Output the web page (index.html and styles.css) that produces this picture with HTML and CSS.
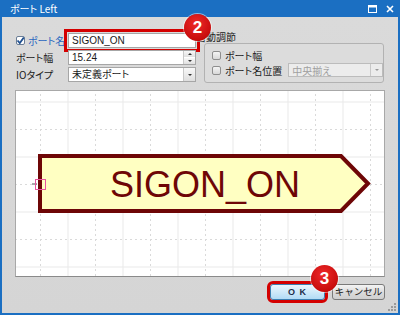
FILE: index.html
```html
<!DOCTYPE html>
<html lang="ja">
<head>
  <meta charset="UTF-8" />
  <title>ポート Left</title>
  <link rel="stylesheet" href="styles.css">
</head>
<body>

  <div class="window">
    <div class="titlebar">
      <span class="title">ポート Left</span>
      <div class="controls">
        <svg width="9" height="8" viewBox="0 0 9 8"><rect x="0.5" y="0.5" width="8" height="7" fill="none" stroke="#fff"/><rect x="0.5" y="0.5" width="8" height="2" fill="#fff"/></svg>
        <svg width="8" height="8" viewBox="0 0 8 8"><path d="M1 1 L7 7 M7 1 L1 7" stroke="#fff" stroke-width="1.6"/></svg>
      </div>
    </div>

    <div class="frame">
      <div class="top">
        <div class="form">
          <label class="lbl">
            <span class="check on"><svg width="9" height="9" viewBox="0 0 9 9"><path d="M1.5 4.5 L3.8 7 L7.8 1.5" fill="none" stroke="#1f4f8f" stroke-width="1.8"/></svg></span>
            <span class="blue">ポート名</span>
          </label>
          <div class="field mark"><span class="val">SIGON_ON</span></div>

          <span class="lbl">ポート幅</span>
          <div class="field">
            <span class="val">15.24</span>
            <span class="spin">
              <span class="spin-btn"><i class="tri up"></i></span>
              <span class="spin-btn"><i class="tri"></i></span>
            </span>
          </div>

          <span class="lbl">IOタイプ</span>
          <div class="field">
            <span class="val">未定義ポート</span>
            <span class="drop"><i class="tri"></i></span>
          </div>
        </div>

        <div class="group">
          <div class="group-title">自動調節</div>
          <div class="group-box">
            <label class="opt"><span class="check"></span>ポート幅</label>
            <div class="opt-row">
              <label class="opt"><span class="check"></span>ポート名位置</label>
              <div class="field disabled">
                <span class="val">中央揃え</span>
                <span class="drop"><i class="tri"></i></span>
              </div>
            </div>
          </div>
        </div>
      </div>

      <div class="canvas">
        <svg width="370" height="187" viewBox="0 0 370 187">
          <defs>
            <pattern id="grid" width="55" height="55" x="25" y="39" patternUnits="userSpaceOnUse">
              <path d="M0.5 0 V55 M0 0.5 H55" stroke="#dadada" stroke-dasharray="2 3" fill="none"/>
              <path d="M28 0 V55 M0 28 H55" stroke="#e9e9e9" fill="none"/>
            </pattern>
          </defs>
          <rect width="370" height="187" fill="url(#grid)"/>
          <path d="M25 66 H326 L353 93.5 L326 121 H25 Z" fill="#ffffc2" stroke="#6e0606" stroke-width="4"/>
          <text x="190" y="107" text-anchor="middle" class="port-name">SIGON_ON</text>
          <path d="M17 94 H22" stroke="#555"/>
          <rect x="20.5" y="89.5" width="10" height="10" fill="none" stroke="#e8559e"/>
        </svg>
      </div>

      <div class="buttons">
        <button class="btn ok">O K</button>
        <button class="btn">キャンセル</button>
      </div>
    </div>

    <span class="badge b2">2</span>
    <span class="badge b3">3</span>
    <svg class="grip" width="8" height="8" viewBox="0 0 8 8">
      <rect x="6" y="0" width="2" height="2" fill="#9a9a9a"/>
      <rect x="3" y="3" width="2" height="2" fill="#9a9a9a"/>
      <rect x="6" y="3" width="2" height="2" fill="#9a9a9a"/>
      <rect x="0" y="6" width="2" height="2" fill="#9a9a9a"/>
      <rect x="3" y="6" width="2" height="2" fill="#9a9a9a"/>
      <rect x="6" y="6" width="2" height="2" fill="#9a9a9a"/>
    </svg>
  </div>

</body>
</html>
```

FILE: styles.css
```css
body {
  margin: 0;
  font-family: 'Noto Sans CJK JP', 'Noto Sans', sans-serif;
  font-feature-settings: "palt";
  font-size: 10px;
  color: #1a1a1a;
}
.window {
  position: relative;
  width: 400px;
  height: 315px;
  display: flex;
  flex-direction: column;
}
.titlebar {
  height: 17px;
  background: #1b6fc2;
  color: #fff;
  display: flex;
  align-items: center;
  justify-content: space-between;
  padding: 0 6px 0 10px;
  font-size: 10px;
}
.title {
  line-height: 1;
}
.controls {
  display: flex;
  gap: 9px;
  align-items: center;
}
.frame {
  flex: 1;
  border: 2px solid #1b6fc2;
  border-top: 0;
  background: linear-gradient(#dadada, #d5d5d5);
  display: flex;
  flex-direction: column;
}

/* top part */
.top {
  display: flex;
  padding: 14px 0 0 14px;
}
.form {
  width: 180px;
  margin-top: 2px;
  display: grid;
  grid-template-columns: 52px 128px;
  grid-auto-rows: 15px;
  row-gap: 2px;
  align-items: center;
}
.lbl {
  display: flex;
  align-items: center;
  gap: 3px;
  white-space: nowrap;
}
.blue {
  color: #2a67c0;
}
.check {
  width: 9px;
  height: 9px;
  box-sizing: border-box;
  border: 1px solid #8e8e8e;
  border-radius: 2px;
  background: linear-gradient(#f4f4f4, #d8d8d8);
  display: inline-flex;
  flex: none;
}
.check.on {
  background: #fff;
  border-color: #6b7e96;
}
.check.on svg {
  margin: -1px;
}
.field {
  height: 15px;
  box-sizing: border-box;
  border: 1px solid #a6a6a6;
  background: #fff;
  display: flex;
  align-items: stretch;
  font-family: 'Liberation Sans', 'Noto Sans CJK JP', sans-serif;
}
.field .val {
  flex: 1;
  padding-left: 3px;
  line-height: 13px;
  white-space: nowrap;
}
.mark {
  outline: 3px solid #d40000;
  outline-offset: 1px;
}
.spin {
  width: 11px;
  display: flex;
  flex-direction: column;
  gap: 1px;
  border-left: 1px solid #c8c8c8;
}
.spin-btn {
  flex: 1;
  background: linear-gradient(#f8f8f8, #e0e0e0);
  display: flex;
  align-items: center;
  justify-content: center;
}
.drop {
  width: 11px;
  border-left: 1px solid #c8c8c8;
  background: linear-gradient(#f8f8f8, #dedede);
  display: flex;
  align-items: center;
  justify-content: center;
}
.tri {
  width: 0;
  height: 0;
  border-left: 2px solid transparent;
  border-right: 2px solid transparent;
  border-top: 2px solid #333;
}
.tri.up {
  border-top: 0;
  border-bottom: 2px solid #333;
}

.group {
  width: 189px;
}
.group-title {
  line-height: 12px;
  height: 12px;
}
.group-box {
  margin-left: 8px;
  width: 180px;
  height: 40px;
  box-sizing: border-box;
  border: 1px solid #b2b2b2;
  border-radius: 3px;
  background: #dcdcdc;
  padding: 5px 0 0 7px;
  display: flex;
  flex-direction: column;
  gap: 2px;
}
.opt {
  display: flex;
  align-items: center;
  gap: 4px;
  height: 12px;
  flex: none;
  white-space: nowrap;
}
.opt-row {
  display: flex;
  align-items: center;
  gap: 6px;
}
.field.disabled {
  width: 97px;
  height: 14px;
  background: #ececec;
  border-color: #bcbcbc;
  color: #a0a0a0;
  font-family: 'Noto Sans CJK JP', sans-serif;
}
.field.disabled .drop {
  background: #ececec;
}
.field.disabled .tri {
  border-top-color: #999;
}

/* canvas */
.canvas {
  margin: 7px 0 0 13px;
  width: 370px;
  height: 187px;
  background: #fff;
  border: 1px solid #a8a8a8;
  border-bottom-color: #8a8a8a;
  box-sizing: border-box;
  overflow: hidden;
}
.canvas svg {
  display: block;
  margin: -1px;
}
.port-name {
  font-family: 'Liberation Sans', sans-serif;
  font-size: 36px;
  fill: #6e0606;
}

/* buttons */
.buttons {
  display: flex;
  justify-content: flex-end;
  gap: 7px;
  padding: 7px 13px 0 0;
}
.btn {
  height: 16px;
  padding: 0;
  font-family: inherit;
  font-size: 9.5px;
  line-height: 1;
  border-radius: 3px;
  border: 1px solid #7a7a7a;
  background: linear-gradient(#f4f4f4, #dcdcdc 50%, #cfcfcf);
  color: #1a1a1a;
  width: 53px;
}
.btn.ok {
  width: 55px;
  border-color: #3c7fb1;
  background: linear-gradient(#eaf6fd, #cfe9f9 50%, #b2dbf5);
  color: #1d2d4a;
  font-family: 'Liberation Sans', sans-serif;
  font-weight: bold;
  font-size: 9px;
  letter-spacing: 1px;
  outline: 3px solid #d40000;
  outline-offset: 0;
}

/* overlays */
.badge {
  position: absolute;
  width: 27px;
  height: 27px;
  border-radius: 50%;
  background: radial-gradient(circle at 45% 35%, #ee2a2a, #c80c0c 70%, #a80000);
  box-shadow: 0 0 0 1px rgba(255,255,255,0.5);
  color: #fff;
  font-family: 'Liberation Sans', sans-serif;
  font-weight: bold;
  font-size: 17px;
  display: flex;
  align-items: center;
  justify-content: center;
}
.b2 {
  left: 184px;
  top: 14px;
}
.b3 {
  left: 311px;
  top: 265px;
}
.grip {
  position: absolute;
  right: 4px;
  bottom: 4px;
}
```
